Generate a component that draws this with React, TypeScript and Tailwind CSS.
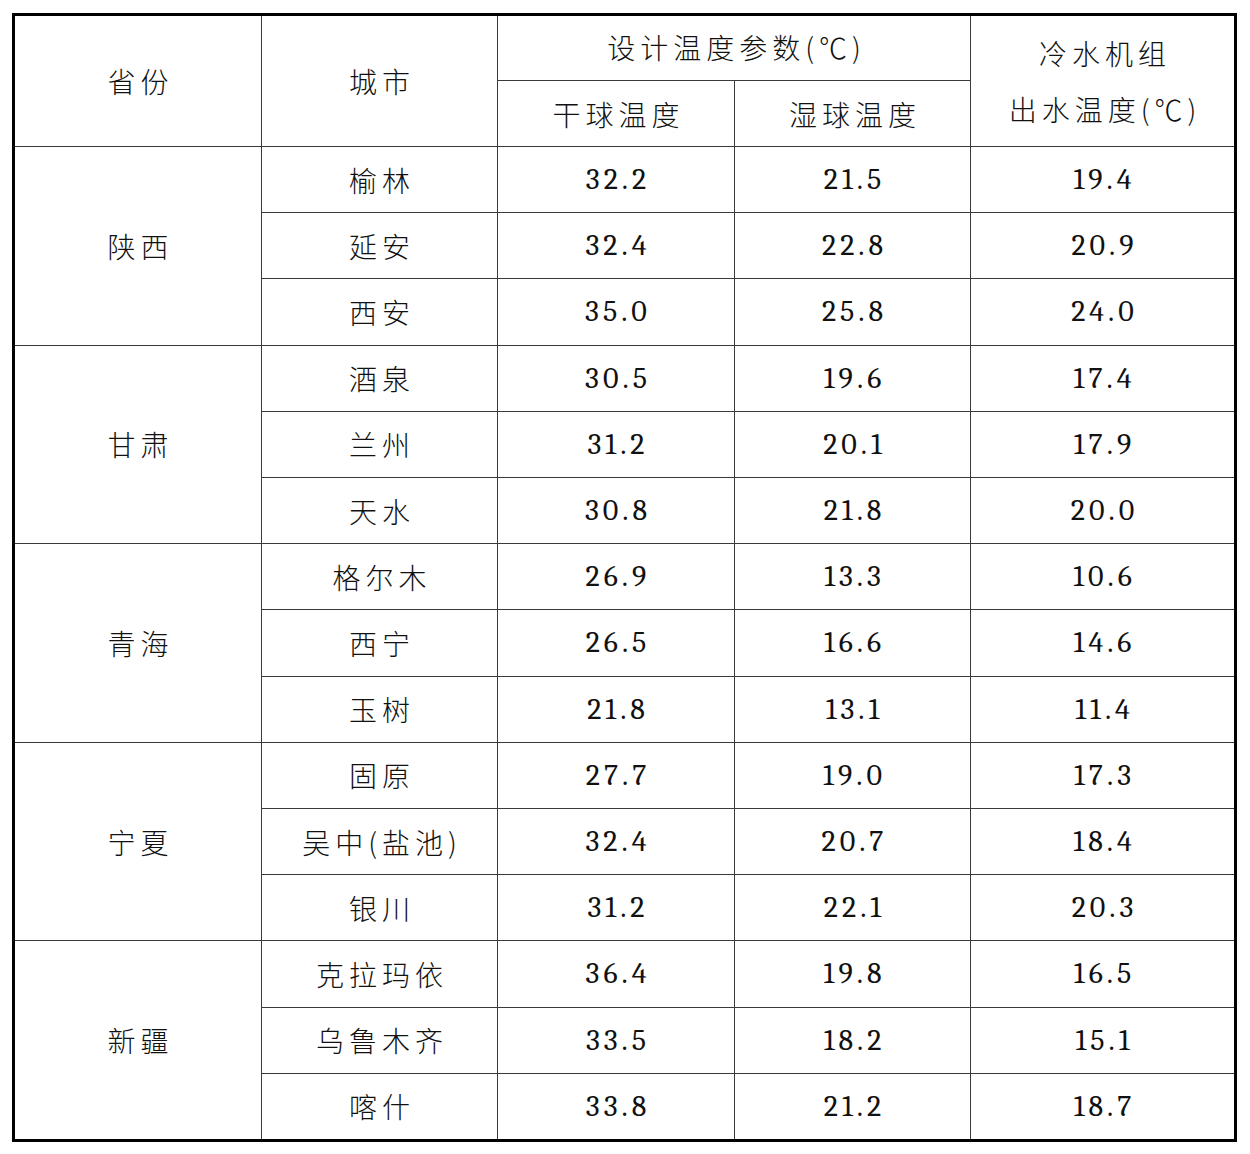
const data = [
  {
    province: '陕西',
    rows: [
      ['榆林', '32.2', '21.5', '19.4'],
      ['延安', '32.4', '22.8', '20.9'],
      ['西安', '35.0', '25.8', '24.0'],
    ],
  },
  {
    province: '甘肃',
    rows: [
      ['酒泉', '30.5', '19.6', '17.4'],
      ['兰州', '31.2', '20.1', '17.9'],
      ['天水', '30.8', '21.8', '20.0'],
    ],
  },
  {
    province: '青海',
    rows: [
      ['格尔木', '26.9', '13.3', '10.6'],
      ['西宁', '26.5', '16.6', '14.6'],
      ['玉树', '21.8', '13.1', '11.4'],
    ],
  },
  {
    province: '宁夏',
    rows: [
      ['固原', '27.7', '19.0', '17.3'],
      ['吴中(盐池)', '32.4', '20.7', '18.4'],
      ['银川', '31.2', '22.1', '20.3'],
    ],
  },
  {
    province: '新疆',
    rows: [
      ['克拉玛依', '36.4', '19.8', '16.5'],
      ['乌鲁木齐', '33.5', '18.2', '15.1'],
      ['喀什', '33.8', '21.2', '18.7'],
    ],
  },
]

// shared cell styles
const cell = 'flex items-center justify-center bg-white text-[#111]'
const cjk =
  'font-[family-name:Noto_Sans_CJK_SC,sans-serif] font-light text-[28px] tracking-[5px] pl-[5px]'
const num = 'font-serif font-normal text-[30px] tracking-[4px] pl-[4px]'

export default function App() {
  return (
    <div className="min-h-[1154px] w-[1250px] bg-white pl-[12px] pt-[13px]">
      {/* table */}
      <div className="grid h-[1129px] w-[1225px] grid-cols-[246px_235px_236px_235px_1fr] grid-rows-[64px_65px_repeat(15,minmax(0,1fr))] gap-px border-[3px] border-black bg-[#3a3a3a]">
        {/* header */}
        <div className={`${cell} ${cjk} row-span-2`}>省份</div>
        <div className={`${cell} ${cjk} row-span-2`}>城市</div>
        <div className={`${cell} ${cjk} col-span-2 pb-[2px]`}>设计温度参数(℃)</div>
        <div className={`${cell} ${cjk} row-span-2 flex-col leading-[56px]`}>
          <span>冷水机组</span>
          <span>出水温度(℃)</span>
        </div>
        <div className={`${cell} ${cjk}`}>干球温度</div>
        <div className={`${cell} ${cjk}`}>湿球温度</div>

        {/* body */}
        {data.map(({ province, rows }) => [
          <div key={province} className={`${cell} ${cjk} row-span-3`}>
            {province}
          </div>,
          ...rows.flatMap(([city, dry, wet, out]) => [
            <div key={city} className={`${cell} ${cjk}`}>
              {city}
            </div>,
            <div key={city + 'd'} className={`${cell} ${num}`}>
              {dry}
            </div>,
            <div key={city + 'w'} className={`${cell} ${num}`}>
              {wet}
            </div>,
            <div key={city + 'o'} className={`${cell} ${num}`}>
              {out}
            </div>,
          ]),
        ])}
      </div>
    </div>
  )
}
